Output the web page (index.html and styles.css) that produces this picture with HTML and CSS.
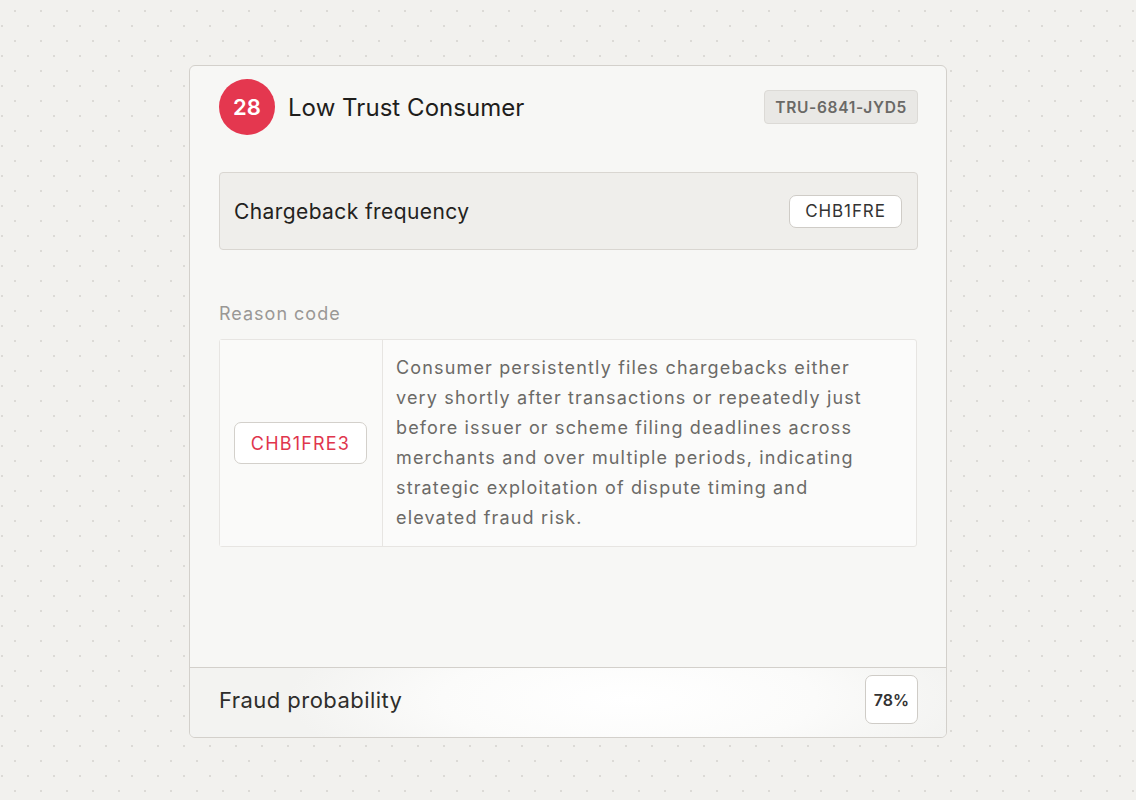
FILE: index.html
```html
<!DOCTYPE html>
<html>
<head>
<meta charset="utf-8">
<link rel="stylesheet" href="styles.css">
</head>
<body>
<div class="page">
  <div class="card">
    <div class="card-body">
      <div class="header">
        <div class="title-group">
          <div class="score">28</div>
          <div class="title">Low Trust Consumer</div>
        </div>
        <div class="ref-tag">TRU-6841-JYD5</div>
      </div>
      <div class="category">
        <div class="category-name">Chargeback frequency</div>
        <div class="code-tag">CHB1FRE</div>
      </div>
      <div class="reason-label">Reason code</div>
      <div class="reason-table">
        <div class="reason-code-cell">
          <div class="reason-tag">CHB1FRE3</div>
        </div>
        <div class="reason-desc">Consumer persistently files chargebacks either very shortly after transactions or repeatedly just before issuer or scheme filing deadlines across merchants and over multiple periods, indicating strategic exploitation of dispute timing and elevated fraud risk.</div>
      </div>
    </div>
    <div class="footer">
      <div class="footer-label">Fraud probability</div>
      <div class="prob-tag">78%</div>
    </div>
  </div>
</div>
</body>
</html>
```
FILE: styles.css
```css
* { box-sizing: border-box; }
html, body { margin: 0; padding: 0; }
body {
  width: 1136px;
  height: 800px;
  font-family: Inter, "Open Sans", "Liberation Sans", sans-serif;
  background-color: #f2f1ee;
  background-image:
    radial-gradient(circle, #dcdad6 1px, transparent 1.3px),
    radial-gradient(circle, #dcdad6 1px, transparent 1.3px);
  background-size: 26px 30px, 26px 30px;
  background-position: 2px -4px, -11px 11px;
  overflow: hidden;
}
.page {
  display: flex;
  justify-content: center;
  padding-top: 65px;
  padding-left: 0;
}
.card {
  width: 758px;
  height: 673px;
  background: #f7f7f5;
  border: 1.5px solid #d3d0cb;
  border-radius: 6px;
  display: flex;
  flex-direction: column;
  overflow: hidden;
}
.card-body {
  flex: 1;
  padding: 13px 28px 0 29px;
}
.header {
  display: flex;
  justify-content: space-between;
  align-items: center;
  height: 56px;
}
.title-group {
  display: flex;
  align-items: center;
  gap: 13px;
}
.score {
  width: 56px;
  height: 56px;
  border-radius: 50%;
  background: #e4374f;
  color: #fff;
  font-size: 22px;
  font-weight: 600;
  display: flex;
  align-items: center;
  justify-content: center;
  letter-spacing: 0;
}
.title {
  font-size: 24px;
  color: #1f1e1c;
  letter-spacing: 0.05px;
}
.ref-tag {
  background: #e9e8e5;
  border: 1px solid #dcdad6;
  border-radius: 4px;
  padding: 0 10px;
  height: 34px;
  display: flex;
  align-items: center;
  font-size: 15.5px;
  font-weight: 600;
  color: #6a6966;
  letter-spacing: 0.7px;
}
.category {
  margin-top: 37px;
  height: 78px;
  background: #efeeeb;
  border: 1px solid #d9d6d1;
  border-radius: 4px;
  display: flex;
  align-items: center;
  justify-content: space-between;
  padding: 0 15px 0 14px;
}
.category-name {
  font-size: 21px;
  color: #232220;
  letter-spacing: 0.4px;
}
.code-tag {
  background: #fff;
  border: 1.5px solid #cfccc7;
  border-radius: 7px;
  height: 33px;
  width: 113px;
  display: flex;
  align-items: center;
  justify-content: center;
  font-size: 17px;
  color: #333;
  letter-spacing: 0.9px;
}
.reason-label {
  margin-top: 52px;
  font-size: 18px;
  color: #9a9895;
  line-height: 24px;
  letter-spacing: 1px;
}
.reason-table {
  margin-top: 13px;
  display: flex;
  border: 1px solid #e7e5e2;
  border-radius: 3px;
  background: #fbfbfa;
  min-height: 208px;
  margin-right: 1px;
}
.reason-code-cell {
  width: 163px;
  border-right: 1.5px solid #e7e5e2;
  display: flex;
  align-items: center;
  padding-left: 14px;
  background: #fafaf9;
}
.reason-tag {
  border: 1.5px solid #d3d0cb;
  border-radius: 7px;
  background: #fff;
  height: 42px;
  width: 133px;
  display: flex;
  align-items: center;
  justify-content: center;
  font-size: 18px;
  color: #e0364d;
  letter-spacing: 1.2px;
}
.reason-desc {
  flex: 1;
  padding: 13px 44px 12px 13px;
  font-size: 18px;
  line-height: 30px;
  color: #6b6a67;
  letter-spacing: 1.15px;
}
.footer {
  height: 70px;
  border-top: 1.5px solid #d3d0cb;
  background: radial-gradient(ellipse 45% 130% at 58% 45%, #ffffff 0%, #fbfbfa 55%, #f3f3f1 100%);
  display: flex;
  align-items: center;
  justify-content: space-between;
  padding: 0 28px 6px 29px;
}
.footer-label {
  font-size: 22px;
  color: #2e2d2b;
  letter-spacing: 0.45px;
}
.prob-tag {
  width: 53px;
  height: 49px;
  background: #fff;
  border: 1.5px solid #cfccc7;
  border-radius: 7px;
  display: flex;
  align-items: center;
  justify-content: center;
  font-size: 16px;
  font-weight: 600;
  color: #333;
}
```
